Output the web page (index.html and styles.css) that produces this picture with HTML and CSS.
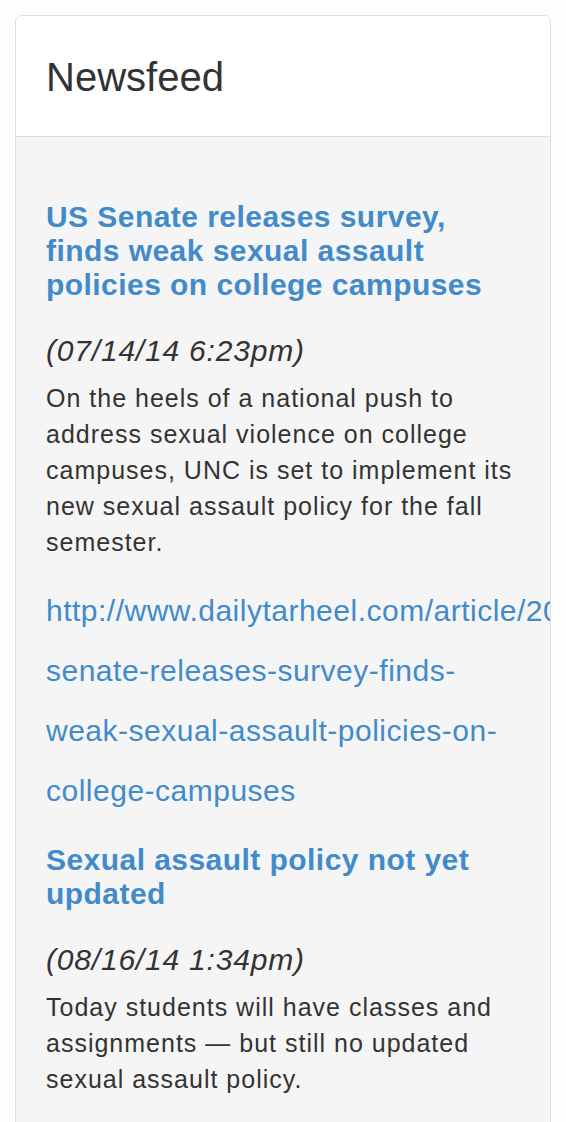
FILE: index.html
```html
<!DOCTYPE html>
<html lang="en">
<head>
<meta charset="utf-8">
<title>Newsfeed</title>
<link rel="stylesheet" href="styles.css">
</head>
<body>
<div class="panel">
  <div class="panel-heading">
    <h2 class="panel-title">Newsfeed</h2>
  </div>
  <div class="panel-body">
    <article class="item">
      <h3 class="item-title"><a href="#">US Senate releases survey, finds weak sexual assault policies on college campuses</a></h3>
      <p class="item-date">(07/14/14 6:23pm)</p>
      <p class="item-text">On the heels of a national push to address sexual violence on college campuses, UNC is set to implement its new sexual assault policy for the fall semester.</p>
      <p class="item-link"><a href="#">http://www.dailytarheel.com/article/2014/07/us-senate-releases-survey-finds-weak-sexual-assault-policies-on-college-campuses</a></p>
    </article>
    <article class="item">
      <h3 class="item-title"><a href="#">Sexual assault policy not yet updated</a></h3>
      <p class="item-date">(08/16/14 1:34pm)</p>
      <p class="item-text">Today students will have classes and assignments — but still no updated sexual assault policy.</p>
      <p class="item-link"><a href="#">http://www.dailytarheel.com/article/2014/08/sexual-assault-policy-not-yet-updated</a></p>
    </article>
  </div>
</div>
</body>
</html>
```

FILE: styles.css
```css
html, body {
  margin: 0;
  padding: 0;
}

body {
  background: #fdfdfd;
  font-family: "Liberation Sans", Arial, sans-serif;
  color: #333333;
  padding: 15px 15px 0;
}

.panel {
  background: #f5f5f5;
  border: 1px solid #dddddd;
  border-radius: 7px;
  overflow: hidden;
}

.panel-heading {
  background: #ffffff;
  border-bottom: 1px solid #dddddd;
  padding: 39px 30px 37px;
}

.panel-title {
  margin: 0;
  font-size: 40px;
  line-height: 44px;
  font-weight: 400;
  color: #333333;
}

.panel-body {
  padding: 41px 30px 60px;
}

.item-title {
  margin: 22px 0 0;
  font-size: 30px;
  line-height: 34px;
  font-weight: 700;
  letter-spacing: 0.45px;
}

.item-title a,
.item-link a {
  color: #428bca;
  text-decoration: none;
}

.item-date {
  margin: 31px 0 0;
  font-size: 30px;
  line-height: 36px;
  font-style: italic;
  letter-spacing: 0.8px;
}

.item-text {
  margin: 11px 0 0;
  font-size: 25px;
  line-height: 36px;
  letter-spacing: 1px;
}

.item-link {
  margin: 21px 0 0;
  font-size: 30px;
  line-height: 60px;
  letter-spacing: 0.5px;
}
```
